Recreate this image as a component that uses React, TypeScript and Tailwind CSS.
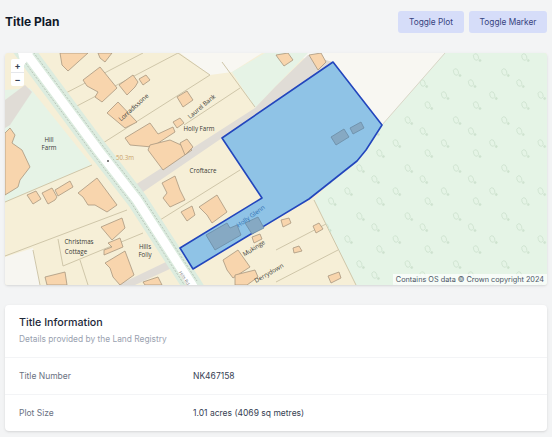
import React from "react";

const buildings = [
  "60,53 88,53 68,71 62,65", "98,53 112,53 105,62 100,58",
  "83,80 100,67 117,88 102,102 95,97 98,92 87,86",
  "119,85 133,75 138,82 135,87 127,95", "139,79 146,75 150,80 143,85",
  "107,113 118,102 137,122 125,128", "177,97 187,91 193,100 183,107",
  "125,138 150,123 158,134 173,127 175,132 152,147 130,145",
  "173,122 180,118 184,123 177,128", "150,145 170,140 192,150 163,170 148,150",
  "180,143 187,139 193,147 185,155",
  "5,133 10,128 15,135 12,143 22,150 30,167 20,180 18,187 5,195",
  "27,195 36,191 41,199 33,204", "42,193 52,188 57,197 55,200 48,204",
  "55,190 70,181 73,187 58,196",
  "78,193 97,178 117,205 107,212 95,205 88,205 83,197",
  "101,227 122,218 125,228 112,240",
  "108,243 120,238 123,247 104,255 104,250 112,247",
  "105,263 125,251 134,275 120,285 113,277 110,268",
  "45,277 65,272 67,285 47,285", "143,282 158,277 162,285 145,285",
  "162,183 175,176 180,190 185,200 170,207 163,198 167,193",
  "181,212 192,206 195,215 187,221",
  "199,207 217,195 227,212 212,223 207,215",
  "252,237 260,234 262,239 254,243",
  "223,260 238,250 250,267 233,278 227,270",
  "235,275 255,270 258,277 247,285 235,285",
  "281,220 289,218 291,223 283,227", "313,226 319,223 323,229 316,233",
  "293,248 299,246 302,251 294,253", "328,276 339,272 341,278 331,283",
  "276,55 288,53 293,60 284,66 278,58", "309,55 321,53 326,62 318,70",
];

const inPlot = [
  "206,235 227,223 230,228 237,225 241,235 215,250",
  "245,223 258,217 264,228 252,234",
  "331,137 344,129 349,137 336,145",
  "350,128 361,122 364,128 353,134",
];

const lines = [
  "143,53 62,95", "178,53 75,107", "210,75 103,143", "222,62 255,107",
  "240,88 184,125", "5,202 92,165", "5,256 127,210", "58,239 63,266 143,233",
  "33,250 40,285", "80,260 88,285", "240,170 160,220", "326,224 276,250",
  "338,250 276,282", "178,53 210,75",
];

const labels: [string, number, number, number, string?][] = [
  ["Hill", 49, 142, 0], ["Farm", 49, 150, 0],
  ["Holly Farm", 199, 131, 0], ["Laurel Bank", 203, 108, -40],
  ["Lorradissone", 135, 109, -42], ["Croftacre", 203, 173, 0],
  ["Christmas", 79, 244, 0], ["Cottage", 76, 254, 0],
  ["Hills", 145, 249, 0], ["Folly", 145, 257, 0],
  ["Mukinge", 255, 250, -32], ["Derrydown", 270, 275, -30],
  ["Holly Glenn", 252, 218, -36, "#2f72b5"], ["50.3m", 125, 160, 0, "#c9a26c"],
];

const rows: [number, number][] = [[476, 9], [456, 24], [471, 35], [444, 47]];
const trees: [number, number][] = [];
for (let k = 0; k < 6; k++) {
  for (const [x0, dy] of rows) {
    for (let i = -3; i < 3; i++) {
      trees.push([x0 + i * 48.3, 48 + dy + k * 48]);
    }
  }
}

function MapDrawing() {
  return (
    <svg viewBox="5 53 542 232" className="block w-full h-full" preserveAspectRatio="none">
      <defs>
        <clipPath id="forest">
          <polygon points="445,53 547,53 547,285 356,285 314,200 382,125" />
        </clipPath>
      </defs>
      <rect x="5" y="53" width="542" height="232" fill="#f6efd7" />
      <polygon points="180,53 445,53 382,125 333,62 262,53 232,72 210,75" fill="#f8f7f2" />
      <polygon points="232,72 265,53 308,53 276,86 255,108" fill="#e6f3e6" />
      <polygon points="5,90 30,88 92,165 5,202" fill="#e6f3e6" />
      <polygon points="5,100 25,85 32,92 10,125 5,128" fill="#e0dcd6" />
      <polygon points="5,257 33,248 40,285 5,285" fill="#f7f6f1" />
      <polygon points="445,53 547,53 547,285 356,285 314,200 382,125" fill="#e5f4e6" />
      <polygon points="135,185 255,108 276,86 308,55 333,62 222,138 140,194" fill="#e0dcd6" />
      <polygon points="118,285 168,261 172,268 135,285" fill="#e0dcd6" />
      {lines.map((p) => (
        <polyline key={p} points={p} fill="none" stroke="#cfc6a9" strokeWidth="1" />
      ))}
      <line x1="445" y1="53" x2="382" y2="125" stroke="#d9d6c8" strokeWidth="1" />
      <line x1="314" y1="200" x2="356" y2="285" stroke="#cfc6a9" strokeWidth="1" />
      <g clipPath="url(#forest)" fill="none" stroke="#cfe3d0" strokeWidth="0.8">
        {trees.map(([x, y]) => (
          <g key={`${x}-${y}`}>
            <ellipse cx={x} cy={y} rx="2.4" ry="3.4" transform={`rotate(-20 ${x} ${y})`} />
            <circle cx={x + 4} cy={y + 3.5} r="1" fill="#cfe3d0" />
          </g>
        ))}
      </g>
      <polyline points="20,45 98,150 137,200 192,285 198,295" fill="none" stroke="#dcecdf" strokeWidth="20" />
      <polyline points="20,45 98,150 137,200 192,285 198,295" fill="none" stroke="#ffffff" strokeWidth="9" />
      <polyline points="15,49 93,154 132,204 187,289" fill="none" stroke="#a9b5a9" strokeWidth="0.7" strokeDasharray="2 1.5" />
      <polyline points="25,41 103,146 142,196 197,281" fill="none" stroke="#a9b5a9" strokeWidth="0.7" strokeDasharray="2 1.5" />
      <polygon points="18,53 33,53 22,68" fill="#ffffff" />
      <circle cx="108" cy="161" r="1" fill="#555555" />
      {buildings.map((p) => (
        <polygon key={p} points={p} fill="#f8d5ad" stroke="#a8977f" strokeWidth="0.8" />
      ))}
      <polygon
        points="333,62 382,125 366,150 357,161 309,199 193,269 180,248 262,198 222,138"
        fill="#8fc3e6"
        stroke="#2346bd"
        strokeWidth="1.6"
        strokeLinejoin="round"
      />
      {inPlot.map((p) => (
        <polygon key={p} points={p} fill="#86a9c3" stroke="#6b8ba5" strokeWidth="0.8" />
      ))}
      {labels.map(([t, x, y, r, c]) => (
        <text
          key={t}
          x={x}
          y={y}
          textAnchor="middle"
          transform={r ? `rotate(${r} ${x} ${y})` : undefined}
          fill={c ?? "#3a3a36"}
          className="font-['Open_Sans',sans-serif] text-[6.2px]"
        >
          {t}
        </text>
      ))}
      <text
        x="183"
        y="279"
        textAnchor="middle"
        transform="rotate(56 183 279)"
        fill="#777777"
        className="font-['Open_Sans',sans-serif] text-[4.5px]"
      >
        Hills Rd
      </text>
    </svg>
  );
}

function InfoRow({ label, value }: { label: string; value: string }) {
  return (
    <div className="flex h-[37px] items-center border-t border-gray-100 px-[14px]">
      <span className="w-[174px] text-[8.5px] text-gray-500">{label}</span>
      <span className="text-[8.5px] text-gray-700">{value}</span>
    </div>
  );
}

export default function App() {
  return (
    <div className="h-[437px] w-[552px] overflow-hidden bg-[#f3f4f5] px-[5px] font-['Inter',sans-serif]">
      <header className="flex items-center justify-between py-[11px]">
        <h1 className="text-[12px] font-bold text-gray-900">Title Plan</h1>
        <div className="flex gap-[5px]">
          <button className="h-[22px] w-[66px] rounded-[3px] bg-[#d6ddf9] text-[8.3px] text-[#36437f]">
            Toggle Plot
          </button>
          <button className="h-[22px] w-[78px] rounded-[3px] bg-[#d6ddf9] text-[8.3px] text-[#36437f]">
            Toggle Marker
          </button>
        </div>
      </header>
      <div className="relative mt-[9px] h-[232px] overflow-hidden rounded-[3px] shadow-sm">
        <MapDrawing />
        <div className="absolute left-[6px] top-[6px] flex w-[13px] flex-col rounded-[2px] bg-white text-center text-[9px] font-bold leading-[13px] text-gray-700">
          <span className="border-b border-gray-200">+</span>
          <span>−</span>
        </div>
        <div className="absolute bottom-0 right-0 bg-white/70 px-[3px] text-[7.3px] leading-[11px] text-gray-600">
          Contains OS data © Crown copyright 2024
        </div>
      </div>
      <section className="mt-[20px] h-[126px] rounded-[4px] bg-white shadow-sm">
        <div className="h-[52px] px-[14px] pt-[11px]">
          <h2 className="text-[10.7px] font-medium leading-[14px] text-gray-800">Title Information</h2>
          <p className="mt-[3px] text-[8.4px] leading-[12px] text-gray-400">Details provided by the Land Registry</p>
        </div>
        <InfoRow label="Title Number" value="NK467158" />
        <InfoRow label="Plot Size" value="1.01 acres (4069 sq metres)" />
      </section>
    </div>
  );
}
